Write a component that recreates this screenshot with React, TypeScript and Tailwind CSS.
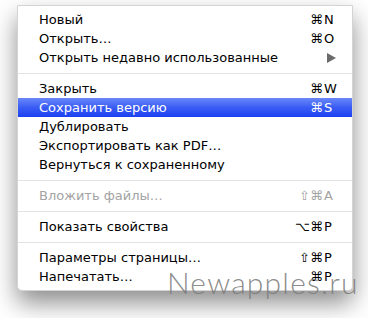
import React from 'react';

type Item =
  | { kind: 'sep' }
  | { kind: 'item'; label: string; mods?: string; keyChar?: string; active?: boolean; disabled?: boolean; submenu?: boolean };

const items: Item[] = [
  { kind: 'item', label: 'Новый', mods: '⌘', keyChar: 'N' },
  { kind: 'item', label: 'Открыть…', mods: '⌘', keyChar: 'O' },
  { kind: 'item', label: 'Открыть недавно использованные', submenu: true },
  { kind: 'sep' },
  { kind: 'item', label: 'Закрыть', mods: '⌘', keyChar: 'W' },
  { kind: 'item', label: 'Сохранить версию', mods: '⌘', keyChar: 'S', active: true },
  { kind: 'item', label: 'Дублировать' },
  { kind: 'item', label: 'Экспортировать как PDF…' },
  { kind: 'item', label: 'Вернуться к сохраненному' },
  { kind: 'sep' },
  { kind: 'item', label: 'Вложить файлы…', mods: '⇧⌘', keyChar: 'A', disabled: true },
  { kind: 'sep' },
  { kind: 'item', label: 'Показать свойства', mods: '⌥⌘', keyChar: 'P' },
  { kind: 'sep' },
  { kind: 'item', label: 'Параметры страницы…', mods: '⇧⌘', keyChar: 'P' },
  { kind: 'item', label: 'Напечатать…', mods: '⌘', keyChar: 'P' },
];

const App: React.FC = () => {
  return (
    <div className="w-[368px] h-[318px] bg-white relative overflow-hidden font-['DejaVu_Sans',sans-serif]">
      <div className="ml-[17px] mt-[5px] w-[336px] bg-white rounded-b-[5px] border border-[#d4d4d4] shadow-[0_12px_24px_rgba(0,0,0,0.45)] pt-[4px] pb-[4px]">
        {items.map((it, i) =>
          it.kind === 'sep' ? (
            <div key={i} className="h-[12px] flex items-center">
              <div className="h-px w-full bg-[#e3e3e3]" />
            </div>
          ) : (
            <div
              key={i}
              className={
                'h-[19px] flex items-center pl-[21px] pr-[14px] text-[13px] leading-none ' +
                (it.active
                  ? 'bg-gradient-to-b from-[#6a86f8] via-[#3a5cf4] to-[#1c40f0] text-white'
                  : it.disabled
                  ? 'text-[#a3a3a3]'
                  : 'text-black')
              }
            >
              <span className="flex-1">{it.label}</span>
              {it.submenu && (
                <svg width="9" height="10" viewBox="0 0 9 10" className="mr-[2px]">
                  <path d="M0 0 L9 5 L0 10 Z" fill="#6b6b6b" />
                </svg>
              )}
              {it.keyChar && (
                <span className="flex">
                  <span className="text-right">{it.mods}</span>
                  <span className="w-[15px] pl-[1px]">{it.keyChar}</span>
                </span>
              )}
            </div>
          )
        )}
      </div>
      <div className="absolute left-[167px] top-[267px] text-[30px] leading-none font-light text-[#7d7d7d]/90 tracking-[1.2px] font-['Lato',sans-serif]">
        Newapples.ru
      </div>
    </div>
  );
};

export default App;
